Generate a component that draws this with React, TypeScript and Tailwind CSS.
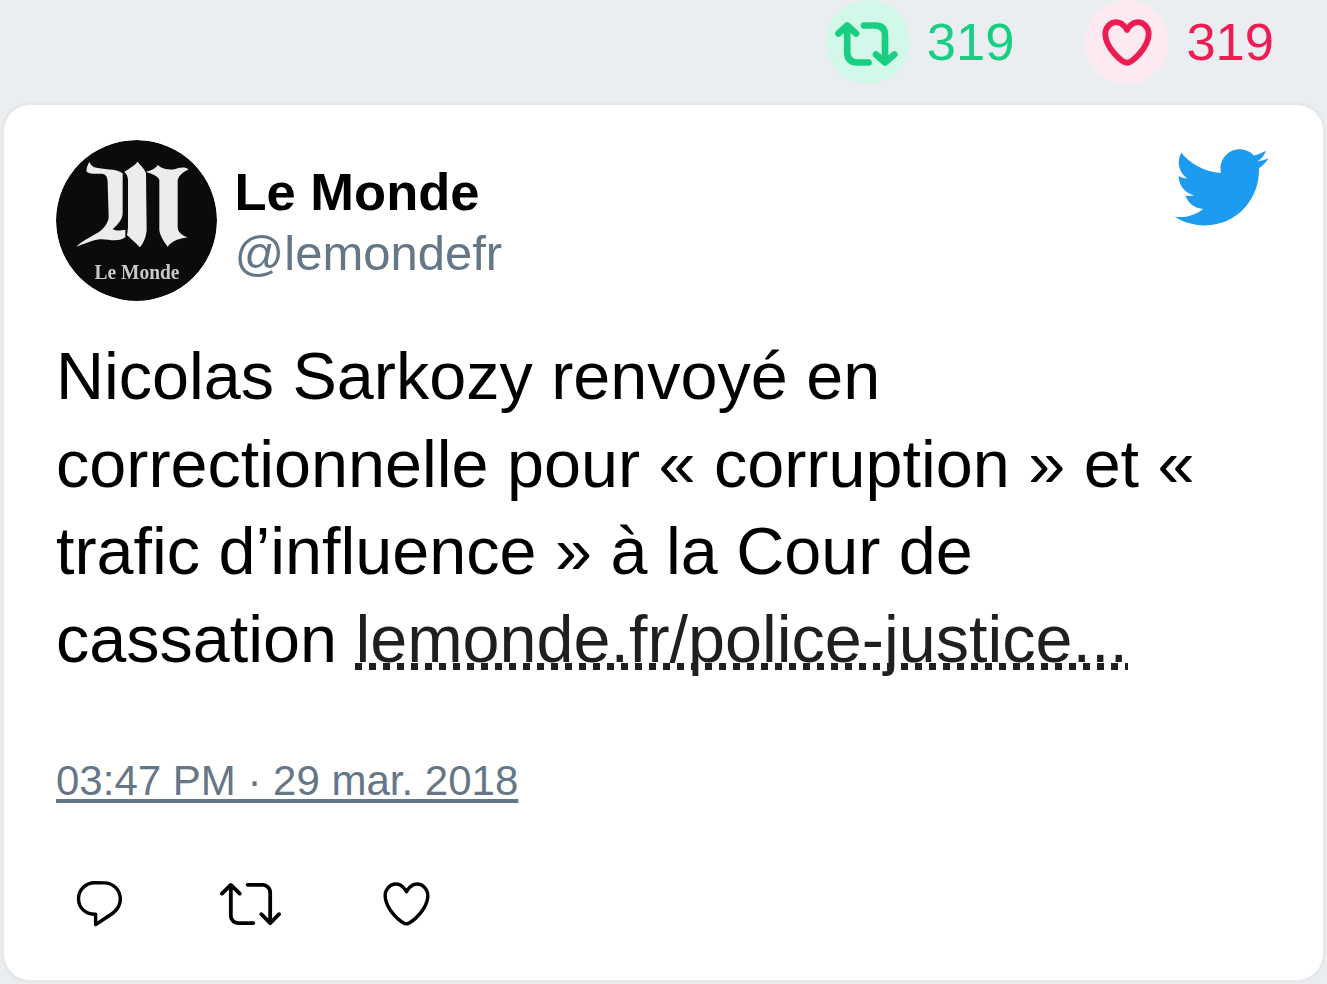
const retweet = "M23.77 15.67c-.292-.293-.767-.293-1.06 0l-2.22 2.22V7.65c0-2.068-1.683-3.75-3.75-3.75h-5.85c-.414 0-.75.336-.75.75s.336.75.75.75h5.85c1.24 0 2.25 1.01 2.25 2.25v10.24l-2.22-2.22c-.293-.293-.768-.293-1.06 0s-.294.768 0 1.06l3.5 3.5c.145.147.337.22.53.22s.383-.072.53-.22l3.5-3.5c.294-.292.294-.767 0-1.06zm-10.66 3.28H7.26c-1.24 0-2.25-1.01-2.25-2.25V6.46l2.22 2.22c.148.147.34.22.532.22s.384-.073.53-.22c.293-.293.293-.768 0-1.06l-3.5-3.5c-.293-.294-.768-.294-1.06 0l-3.5 3.5c-.294.292-.294.767 0 1.06s.767.293 1.06 0l2.22-2.22V16.7c0 2.068 1.683 3.75 3.75 3.75h5.85c.414 0 .75-.336.75-.75s-.337-.75-.75-.75z";
const reply = "M14.046 2.242l-4.148-.01h-.002c-4.374 0-7.8 3.427-7.8 7.802 0 4.098 3.186 7.206 7.465 7.37v3.828c0 .108.044.286.12.403.142.225.384.347.632.347.138 0 .277-.038.402-.118.264-.168 6.473-4.14 8.088-5.506 1.902-1.61 3.04-3.97 3.043-6.312v-.017c-.006-4.367-3.43-7.787-7.8-7.788zm3.787 12.972c-1.134.96-4.862 3.405-6.772 4.643V16.67c0-.414-.335-.75-.75-.75h-.396c-3.66 0-6.318-2.476-6.318-5.886 0-3.534 2.768-6.302 6.3-6.302l4.147.01h.002c3.532 0 6.3 2.766 6.302 6.296-.003 1.91-.942 3.844-2.514 5.176z";
const heart = "M12 21.638h-.014C9.403 21.59 1.95 14.856 1.95 8.478c0-3.064 2.525-5.754 5.403-5.754 2.29 0 3.83 1.58 4.646 2.73.814-1.148 2.354-2.73 4.645-2.73 2.88 0 5.404 2.69 5.404 5.755 0 6.376-7.454 13.11-10.037 13.157H12zM7.354 4.225c-2.08 0-3.903 1.988-3.903 4.255 0 5.74 7.034 11.596 8.55 11.658 1.518-.062 8.55-5.917 8.55-11.658 0-2.267-1.823-4.255-3.903-4.255-2.528 0-3.94 2.936-3.952 2.965-.23.562-1.156.562-1.387 0-.014-.03-1.425-2.965-3.954-2.965z";
const bird = "M23.643 4.937c-.835.37-1.732.62-2.675.733.962-.576 1.7-1.49 2.048-2.578-.9.534-1.897.922-2.958 1.13-.85-.904-2.06-1.47-3.4-1.47-2.572 0-4.658 2.086-4.658 4.66 0 .364.042.718.12 1.06-3.873-.195-7.304-2.05-9.602-4.868-.4.69-.63 1.49-.63 2.342 0 1.616.823 3.043 2.072 3.878-.764-.025-1.482-.234-2.11-.583v.06c0 2.257 1.605 4.14 3.737 4.568-.392.106-.803.162-1.227.162-.3 0-.593-.028-.877-.082.593 1.85 2.313 3.198 4.352 3.234-1.595 1.25-3.604 1.995-5.786 1.995-.376 0-.747-.022-1.112-.065 2.062 1.323 4.51 2.093 7.14 2.093 8.57 0 13.255-7.098 13.255-13.254 0-.2-.005-.402-.014-.602.91-.658 1.7-1.477 2.323-2.41z";

function Icon({ d, className, stroke = 0 }: { d: string; className: string; stroke?: number }) {
  return (
    <svg viewBox="0 0 24 24" fill="currentColor" stroke={stroke ? "currentColor" : "none"} strokeWidth={stroke} className={className}>
      <path d={d} />
    </svg>
  );
}

function BoldRetweet() {
  return (
    <svg viewBox="0 0 63 44" fill="none" stroke="currentColor" strokeWidth="6.6" strokeLinecap="round" strokeLinejoin="round" className="w-[63px] h-[44px] mr-[3px] mt-[4px]">
      <path d="M3.5 11.5 L12.2 3.5 L21 11.5 M12.2 5 V30 Q12.2 40.5 22.5 40.5 H33.5" />
      <path d="M29 3.5 H40 Q50 3.5 50 13.5 V39 M41 32.5 L50 40.5 L59.3 32.5" />
    </svg>
  );
}

function Avatar() {
  return (
    <svg viewBox="0 0 161 161" className="w-[161px] h-[161px] shrink-0 rounded-full">
      <defs>
        <filter id="soft"><feGaussianBlur stdDeviation="1" /></filter>
        <filter id="soft2"><feGaussianBlur stdDeviation="0.6" /></filter>
      </defs>
      <circle cx="80.5" cy="80.5" r="80.5" fill="#0b0b0b" />
      <g filter="url(#soft)" fill="#ececec" transform="translate(10 10) scale(0.3333)">
        <path d="M70 35 C65 45 60 55 62 65 C75 75 95 70 112 72 C122 75 125 85 125 100 L128 200 C128 215 115 235 100 245 C85 255 60 265 30 290 C55 282 75 272 100 268 C125 265 150 280 178 262 L178 240 C165 240 155 245 140 238 C160 220 170 205 170 190 L170 70 C150 55 110 60 85 52 C78 48 72 42 70 35 Z" />
        <path d="M175 65 C190 55 205 48 215 35 C225 48 235 55 240 70 L242 240 C240 260 235 275 222 292 C205 275 190 262 183 255 L186 235 L186 90 C186 80 182 72 175 65 Z" />
        <path d="M240 65 C255 62 270 55 275 45 C290 60 320 62 335 55 C345 52 358 50 368 58 C350 68 340 75 335 90 L335 230 C335 245 345 255 365 262 C345 265 320 270 305 290 C290 270 282 255 280 240 L280 90 C278 80 260 72 240 65 Z" />
      </g>
      <text x="81" y="139" textAnchor="middle" fontFamily="'Liberation Serif', serif" fontWeight="700" fontSize="21" fill="#c8c8c8" filter="url(#soft2)" textLength="85" lengthAdjust="spacingAndGlyphs">Le Monde</text>
    </svg>
  );
}

export default function App() {
  return (
    <div className="h-[984px] overflow-hidden bg-[#ebeef1] font-['Liberation_Sans',sans-serif] flex flex-col">
      <div className="h-[105px] shrink-0 flex justify-end items-start pr-[53px]">
        <div className="flex items-center h-[84px] gap-[17px] mr-[71px]">
          <div className="w-[84px] h-[84px] rounded-full bg-[#d1f8e8] flex items-center justify-center text-[#17ce83]">
            <BoldRetweet />
          </div>
          <span className="text-[52.5px] text-[#17ce83] leading-none">319</span>
        </div>
        <div className="flex items-center h-[84px] gap-[17px]">
          <div className="w-[84px] h-[84px] rounded-full bg-[#fdeaf1] flex items-center justify-center text-[#ec1d53]">
            <Icon d={heart} stroke={1} className="w-[56px] h-[56px]" />
          </div>
          <span className="text-[52.5px] text-[#ec1d53] leading-none">319</span>
        </div>
      </div>
      <div className="mx-[4px] h-[875px] shrink-0 bg-white rounded-[26px] outline-[3px] outline-[#e6e8ea] pt-[35px] pl-[52px] pr-[53px] flex flex-col">
        <div className="flex items-start justify-between">
          <div className="flex items-center gap-[17.5px]">
            <Avatar />
            <div className="flex flex-col">
              <span className="text-[52.5px] font-bold text-black leading-[64px]">Le Monde</span>
              <span className="text-[49px] text-[#657786] leading-[58px]">@lemondefr</span>
            </div>
          </div>
          <Icon d={bird} className="w-[99px] h-[99px] mt-[-2px] text-[#1d9bf0]" />
        </div>
        <p className="mt-[32px] pr-[70px] text-[66.5px] leading-[87.7px] text-black">
          Nicolas Sarkozy renvoyé en correctionnelle pour « corruption » et « trafic d’influence » à la Cour de cassation{" "}
          <span className="text-[#1f1f1f] bg-[repeating-linear-gradient(90deg,#1f1f1f_0,#1f1f1f_7px,transparent_7px,transparent_14px)] bg-no-repeat bg-[length:100%_7px] bg-[position:left_0_bottom_6px]">lemonde.fr/police-justice...</span>
        </p>
        <div className="mt-[72px] text-[42px] leading-[50px] text-[#657786] underline underline-offset-[4px]">03:47 PM · 29 mar. 2018</div>
        <div className="mt-[67px] flex items-center">
          <Icon d={reply} className="w-[55px] h-[55px] text-black ml-[16px]" />
          <Icon d={retweet} className="w-[61px] h-[61px] text-black ml-[93px]" />
          <Icon d={heart} className="w-[55px] h-[55px] text-black ml-[98px]" />
        </div>
      </div>
    </div>
  );
}
